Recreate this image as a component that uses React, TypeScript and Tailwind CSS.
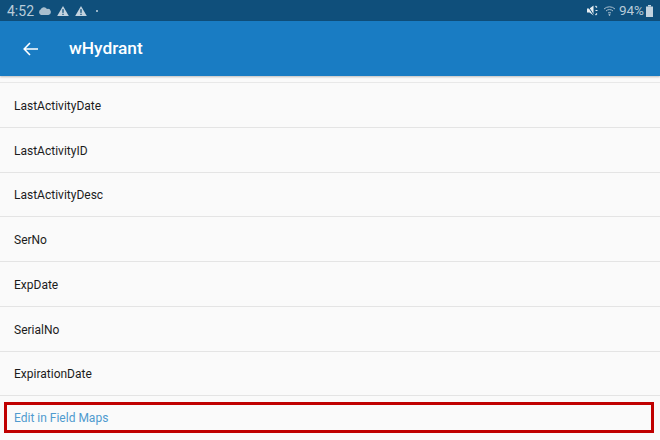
const FIELDS = [
  'LastActivityDate',
  'LastActivityID',
  'LastActivityDesc',
  'SerNo',
  'ExpDate',
  'SerialNo',
  'ExpirationDate',
];

function WarnIcon() {
  return (
    <svg width="12" height="12" viewBox="0 0 13 12">
      <path d="M6.5 0.5 L12.8 11.5 L0.2 11.5 Z" fill="#c3d3df" />
      <rect x="5.8" y="4" width="1.4" height="4" fill="#0f4f7b" />
      <rect x="5.8" y="9" width="1.4" height="1.3" fill="#0f4f7b" />
    </svg>
  );
}

function StatusBar() {
  return (
    <div className="h-[21px] bg-[#0f4f7b] flex items-center pl-[7px] pr-[7px] text-[#b9ccd9] shrink-0">
      <span className="text-[14px] leading-none w-[26px]">4:52</span>
      <svg width="13" height="8" viewBox="0 0 13 8" className="ml-[5px]">
        <path d="M3 8 A3 3 0 0 1 2.6 2.6 A3.6 3.6 0 0 1 9 2 A3 3 0 0 1 10.5 8 Z" fill="#a9bfcf" />
      </svg>
      <div className="ml-[6px] flex"><WarnIcon /></div>
      <div className="ml-[6px] flex"><WarnIcon /></div>
      <div className="ml-[9px] w-[2px] h-[2px] rounded-full bg-[#c3d3df]" />
      <div className="ml-auto flex items-center">
        <svg width="12" height="11" viewBox="0 0 12 11">
          <path d="M0 3.5 H2.5 L6.5 0.5 V10.5 L2.5 7.5 H0 Z" fill="#e6edf2" />
          <path d="M0.5 0.5 L7 10.5" stroke="#0f4f7b" strokeWidth="1" />
          <path d="M8.5 1 L10 2.5 M8.5 5.5 H10.5 M8.5 10 L10 8.5" stroke="#e6edf2" strokeWidth="1.2" />
        </svg>
        <svg width="14" height="11" viewBox="0 0 14 11" className="ml-[4px]" fill="none" stroke="#a9bfcf" strokeWidth="1">
          <path d="M1 4 A8 8 0 0 1 12 4" />
          <path d="M3 6 A5 5 0 0 1 10 6" />
          <path d="M5 8 A2.5 2.5 0 0 1 8 8" />
          <circle cx="6.5" cy="9.8" r="0.6" fill="#a9bfcf" />
        </svg>
        <span className="ml-[2px] text-[13.5px] leading-none">94%</span>
        <svg width="7" height="12" viewBox="0 0 7 12" className="ml-[2px]">
          <rect x="2" y="0" width="3" height="1.5" fill="#c3d3df" />
          <rect x="0" y="1.5" width="7" height="10.5" fill="#c3d3df" />
        </svg>
      </div>
    </div>
  );
}

function AppBar() {
  return (
    <div className="h-[55px] bg-[#197cc3] flex items-center shrink-0 shadow-[0_1px_2px_rgba(0,0,0,0.25)]">
      <svg width="16" height="14" viewBox="0 0 16 14" className="ml-[23px]" fill="none" stroke="#fff" strokeWidth="1.6">
        <path d="M15 7 H1.5 M7 1 L1.2 7 L7 13" />
      </svg>
      <span className="ml-[30px] text-white text-[17.3px] font-medium">wHydrant</span>
    </div>
  );
}

export default function App() {
  return (
    <div className="w-[660px] h-[440px] overflow-hidden flex flex-col bg-[#fafafa] font-['Roboto',sans-serif]">
      <StatusBar />
      <AppBar />
      <div className="h-[7px] border-b border-[#e8e8e8] shrink-0" />
      {FIELDS.map((name) => (
        <div key={name} className="h-[44.75px] shrink-0 flex items-center px-[14px] pt-[2px] border-b border-[#e4e4e4] text-[12px] text-[#1c1c1c]">
          {name}
        </div>
      ))}
      <div className="mt-[6px] ml-[4px] w-[650px] h-[31px] border-[3px] border-[#c00000] flex items-center pl-[7px] text-[12px] text-[#4f9bcf]">
        Edit in Field Maps
      </div>
    </div>
  );
}
